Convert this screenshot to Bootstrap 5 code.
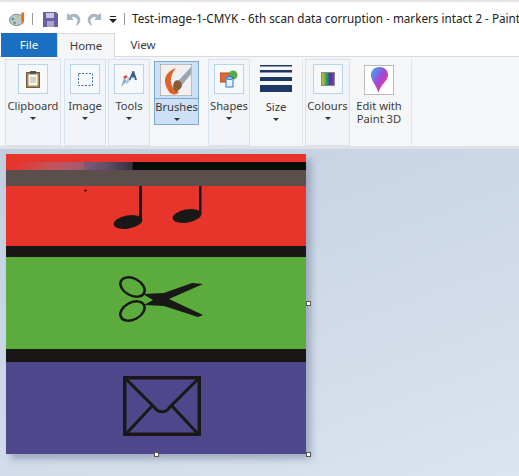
<!DOCTYPE html>
<html lang="en">
<head>
    <meta charset="UTF-8">
    <meta name="viewport" content="width=device-width, initial-scale=1.0">
    <title>Paint</title>
    <link href="https://cdn.jsdelivr.net/npm/bootstrap@5.3.0/dist/css/bootstrap.min.css" rel="stylesheet">
    <style>
        body {
            width: 519px;
            height: 476px;
            overflow: hidden;
            font-family: "Noto Sans", "Open Sans", sans-serif;
            font-size: 11.2px;
            color: #3b3b3b;
            background: #fff;
        }
        .title-bar {
            height: 33px;
            padding: 3px 0 0 9px;
            border-top: 2px solid #e4e4e4;
            background: #fff;
        }
        .title-bar > * { flex: none; }
        .title-text {
            font-size: 11.7px;
            color: #222;
            white-space: nowrap;
            margin-left: 7px;
        }
        .title-sep {
            width: 1px;
            height: 12px;
            background: #999;
        }
        .sep-a { margin-left: 6px; }
        .sep-b { margin-left: 7px; }
        .qa-save { margin-left: 10px; }
        .qa-undo { margin-left: 8px; }
        .qa-redo { margin-left: 6px; }
        .qa-more { margin-left: 7px; }
        .tab-row {
            height: 24px;
            background: #fff;
            border-bottom: 1px solid #dadbdc;
        }
        .tab-item {
            height: 24px;
            line-height: 23px;
            text-align: center;
            font-size: 11.5px;
        }
        .tab-file {
            width: 56px;
            margin-left: 1px;
            background: #1a6fc0;
            color: #fff;
        }
        .tab-home {
            width: 58px;
            background: #f5f6f7;
            border: 1px solid #dadbdc;
            border-bottom: 0;
            height: 25px;
        }
        .tab-view { width: 56px; }
        .ribbon {
            height: 92px;
            padding: 2px 0 0 5px;
            background: #f5f6f7;
            border-bottom: 3px solid #dfe1e4;
        }
        .rib-group {
            flex: none;
            height: 87px;
            border: 1px solid #d5e3f0;
            background: #f1f5f9;
            padding-top: 4px;
            text-align: center;
            line-height: 13px;
        }
        .rib-box {
            width: 30px;
            height: 30px;
            margin: 0 auto 5px;
            border: 1px solid #b9d5ec;
            background: #f6f8fa;
        }
        .rib-arrow {
            width: 0;
            height: 0;
            margin: 5px auto 0;
            border-left: 3px solid transparent;
            border-right: 3px solid transparent;
            border-top: 3px solid #333;
        }
        .rib-active {
            flex: none;
            width: 45px;
            height: 64px;
            margin: 2px 9px 0 4px;
            border: 1px solid #7ca9d3;
            background: #cce1f5;
            text-align: center;
        }
        .rib-active-top {
            height: 37px;
            border-bottom: 1px solid #7ca9d3;
            padding: 2px 0 0 5px;
        }
        .brush-label {
            margin-top: 1px;
            line-height: 13px;
        }
        .rib-plain {
            flex: none;
            text-align: center;
            line-height: 13px;
        }
        .rib-line {
            flex: none;
            width: 1px;
            height: 86px;
            background: #e2e4e7;
        }
        .grp-clip { width: 56px; }
        .grp-image { width: 42px; margin-left: 3px; }
        .grp-tools { width: 42px; margin-left: 2px; }
        .grp-shapes { width: 42px; }
        .grp-colours { width: 45px; margin-left: 2px; }
        .grp-size { width: 52px; }
        .grp-edit { width: 52px; margin: 0 6px 0 3px; padding-top: 6px; }
        .size-icon { margin-top: 6px; }
        .size-label { margin-top: 7px; }
        .edit-box {
            margin-bottom: 4px;
            border-color: #bbb;
            background: #fff;
        }
        .canvas-area {
            height: 327px;
            padding: 5px 0 0 6px;
            background: linear-gradient(160deg, #c3cfe1, #dbe4ef);
        }
        .picture {
            width: 300px;
            height: 300px;
            box-shadow: 5px 5px 7px rgba(105, 120, 150, .5);
        }
        .band { flex: none; }
        .band-red { background: #e7352b; }
        .band-black { background: #191817; }
        .band-green { background: #5bac3d; }
        .band-purple { background: #4e478c; }
        .band-grey { height: 16px; background: #5b4f4b; }
        .band-glitch {
            height: 8px;
            background: linear-gradient(90deg, #e7352b 2%, #c25560 16%, #a05a70 26%, #7d5a78 26%, #6d5370 30%, #5f4c66 34%, #4a3d52 38%, #3a3040 42%, #060d06 42.500%);
        }
        .h-8 { height: 8px; }
        .h-60 { height: 60px; }
        .h-11 { height: 11px; }
        .h-13 { height: 13px; }
        .h-92 { height: 92px; }
        .handle {
            position: absolute;
            width: 5px;
            height: 5px;
            border: 1px solid #555;
            background: #fff;
        }
        .handle-top { left: 306px; top: 152px; }
        .handle-right { left: 306px; top: 303px; }
        .handle-bottom { left: 154px; top: 303px; }
    </style>
</head>
<body>
    <div class="title-bar d-flex align-items-center">
        <svg width="17" height="16" viewBox="0 0 18 16">
            <ellipse cx="8" cy="9" rx="7.5" ry="6" fill="#b7c9c9" stroke="#77898f"/>
            <circle cx="4" cy="8" r="1.4" fill="#3f8fcf"/>
            <circle cx="6" cy="12" r="1.4" fill="#58a55c"/>
            <circle cx="9" cy="5.5" r="1.3" fill="#e1ba4a"/>
            <path d="M13 1h3v8l-1.500 5-1.500-5z" fill="#d9702c"/>
        </svg>
        <span class="title-sep sep-a"></span>
        <svg class="qa-save" width="15" height="15" viewBox="0 0 15 15">
            <path d="M0 0h13l2 2v13H0z" fill="#6d5da6"/>
            <path d="M3 1h8v5H3z" fill="#c8c6dc"/>
            <path d="M4 9h7v6H4z" fill="#a9a3c9"/>
        </svg>
        <svg class="qa-undo" width="15" height="15" viewBox="0 0 15 15">
            <path d="M1 1v7h7L5.500 5.500C8 4 11 5.500 11.500 9L10 14c3.500-1.500 5-5 4-8C12.500 1.500 7.500.5 4 3z" fill="#a9b6c4"/>
        </svg>
        <svg class="qa-redo" width="15" height="15" viewBox="0 0 15 15">
            <path d="M14 1v7H7l2.500-2.500C7 4 4 5.500 3.500 9L5 14C1.500 12.500 0 9 1 6 2.500 1.500 7.500.5 11 3z" fill="#a9b6c4"/>
        </svg>
        <svg class="qa-more" width="8" height="7" viewBox="0 0 8 7">
            <path d="M1 0h6v1H1zM0 3h8L4 7z" fill="#222"/>
        </svg>
        <span class="title-sep sep-b"></span>
        <span class="title-text">Test-image-1-CMYK - 6th scan data corruption - markers intact 2 - Paint</span>
    </div>

    <div class="tab-row d-flex">
        <div class="tab-item tab-file">File</div>
        <div class="tab-item tab-home">Home</div>
        <div class="tab-item tab-view">View</div>
    </div>

    <div class="ribbon d-flex">
        <div class="rib-group grp-clip">
            <div class="rib-box d-flex align-items-center justify-content-center">
                <svg width="14" height="17" viewBox="0 0 14 17">
                    <rect x=".5" y="1.500" width="13" height="15" fill="#a98a5f" stroke="#6f5b41"/>
                    <rect x="2.500" y="3.500" width="9" height="11" fill="#fbf7e6"/>
                    <rect x="4" y="0" width="6" height="3" fill="#555"/>
                    <path d="M4 7h6M4 9h6M4 11h6" stroke="#aaa"/>
                </svg>
            </div>
            Clipboard
            <div class="rib-arrow"></div>
        </div>
        <div class="rib-group grp-image">
            <div class="rib-box d-flex align-items-center justify-content-center">
                <svg width="15" height="13" viewBox="0 0 15 13">
                    <rect x=".5" y=".5" width="14" height="12" fill="none" stroke="#3a6ea5" stroke-dasharray="2 1.500"/>
                </svg>
            </div>
            Image
            <div class="rib-arrow"></div>
        </div>
        <div class="rib-group grp-tools">
            <div class="rib-box d-flex align-items-center justify-content-center">
                <svg width="18" height="18" viewBox="0 0 18 18">
                    <path d="M1 17l3-9 3 3z" fill="#7eb0dc"/>
                    <path d="M5 12L10 6l2 2-5 6z" fill="#aac8e4"/>
                    <path d="M3 7l3-2 2 2-3 2z" fill="#d9533c"/>
                    <path d="M9 10l3.500-9h1.500l3 9h-2l-.7-2.500h-3L10.500 10z" fill="#3c5f8f"/>
                </svg>
            </div>
            Tools
            <div class="rib-arrow"></div>
        </div>
        <div class="rib-active">
            <div class="rib-active-top">
                <svg class="d-block" width="32" height="32" viewBox="0 0 32 32">
                    <rect width="32" height="32" fill="#f0f0f0" stroke="#888"/>
                    <path d="M16 4C5 8 1 17 10 29c3 2 7 2 9-1C11 25 7 15 16 4z" fill="#e0622a"/>
                    <path d="M31 3L18 17l4 4L31 10z" fill="#9ba6b3"/>
                    <path d="M15 17c3-2 6 0 7 4 0 3-3 5-6 7-3-3-4-7-1-11z" fill="#8a5a32"/>
                </svg>
            </div>
            <div class="brush-label">Brushes</div>
            <div class="rib-arrow"></div>
        </div>
        <div class="rib-group grp-shapes">
            <div class="rib-box d-flex align-items-center justify-content-center">
                <svg width="18" height="18" viewBox="0 0 18 18">
                    <rect x="0" y="3" width="9" height="9" fill="#e2693d" stroke="#b04a25"/>
                    <circle cx="13" cy="5" r="4.500" fill="#57ac4a"/>
                    <path d="M6 8h7v9H6z" fill="#e8f2fa" stroke="#2c77bd"/>
                    <ellipse cx="9.500" cy="8" rx="3.500" ry="1.500" fill="#9ac6ea" stroke="#2c77bd"/>
                </svg>
            </div>
            Shapes
            <div class="rib-arrow"></div>
        </div>
        <div class="rib-plain grp-size">
            <svg class="d-block mx-auto size-icon" width="32" height="28" viewBox="0 0 32 28">
                <path d="M0 0h32v1.500H0z M0 5h32v2.500H0z M0 12h32v4H0z M0 20h32v7H0z" fill="#1f3864"/>
            </svg>
            <div class="size-label">Size</div>
            <div class="rib-arrow"></div>
        </div>
        <div class="rib-line"></div>
        <div class="rib-group grp-colours">
            <div class="rib-box d-flex align-items-center justify-content-center">
                <svg width="14" height="14" viewBox="0 0 14 14">
                    <defs>
                        <linearGradient id="spectrum">
                            <stop offset="0" stop-color="#d9c43a"/>
                            <stop offset=".35" stop-color="#3fa84a"/>
                            <stop offset=".65" stop-color="#3240b0"/>
                            <stop offset="1" stop-color="#b0308f"/>
                        </linearGradient>
                    </defs>
                    <rect x=".5" y=".5" width="13" height="13" fill="url(#spectrum)" stroke="#888"/>
                </svg>
            </div>
            Colours
            <div class="rib-arrow"></div>
        </div>
        <div class="rib-plain grp-edit">
            <div class="rib-box edit-box d-flex align-items-center justify-content-center">
                <svg width="17" height="26" viewBox="0 0 17 26">
                    <defs>
                        <linearGradient id="drop" x1="0" y1="0" x2="1" y2="1">
                            <stop offset="0" stop-color="#2fb4f0"/>
                            <stop offset=".5" stop-color="#a645d8"/>
                            <stop offset=".8" stop-color="#ee3f7c"/>
                            <stop offset="1" stop-color="#f4a52c"/>
                        </linearGradient>
                    </defs>
                    <path d="M8.500 0C3.500 0 0 3.500 0 8c0 6 5 9 7.500 18C9 18 17 14 17 8c0-4.500-3.500-8-8.500-8z" fill="url(#drop)"/>
                </svg>
            </div>
            Edit with<br>Paint 3D
        </div>
        <div class="rib-line"></div>
    </div>

    <div class="canvas-area position-relative">
        <div class="picture d-flex flex-column">
            <div class="band band-red h-8"></div>
            <div class="band band-glitch"></div>
            <div class="band band-grey"></div>
            <div class="band band-red h-60">
                <svg class="d-block" width="300" height="60" viewBox="0 0 300 60">
                    <path d="M78 4.500h3M79.500 3v3" stroke="#4a1515"/>
                    <path d="M133 0h3v34h-3z M193 0h2.500v28h-2.500z" fill="#191817"/>
                    <ellipse cx="122" cy="36" rx="14.500" ry="6.500" fill="#191817" transform="rotate(-10 122 36)"/>
                    <ellipse cx="181" cy="30" rx="14.500" ry="6.500" fill="#191817" transform="rotate(-10 181 30)"/>
                </svg>
            </div>
            <div class="band band-black h-11"></div>
            <div class="band band-green h-92">
                <svg class="d-block" width="300" height="92" viewBox="0 0 300 92">
                    <ellipse cx="126.500" cy="30" rx="13" ry="8.500" fill="none" stroke="#191817" stroke-width="2.500" transform="rotate(28 126.500 30)"/>
                    <ellipse cx="126.500" cy="54" rx="13" ry="8.500" fill="none" stroke="#191817" stroke-width="2.500" transform="rotate(-28 126.500 54)"/>
                    <path d="M137 37l21-1 28-10 11 1-34 15 34 16-5 2-34-11-20-1 9-5z" fill="#191817"/>
                </svg>
            </div>
            <div class="band band-black h-13"></div>
            <div class="band band-purple h-92">
                <svg class="d-block" width="300" height="92" viewBox="0 0 300 92">
                    <rect x="118.750" y="15.750" width="74.500" height="56.500" fill="none" stroke="#191817" stroke-width="3.500"/>
                    <path d="M119 16l30 30c3 5 11 5 14 0l30-30M119 73l27-29M193 73l-27-29" fill="none" stroke="#191817" stroke-width="3"/>
                </svg>
            </div>
        </div>
        <span class="handle handle-top"></span>
        <span class="handle handle-right"></span>
        <span class="handle handle-bottom"></span>
    </div>
</body>
</html>
